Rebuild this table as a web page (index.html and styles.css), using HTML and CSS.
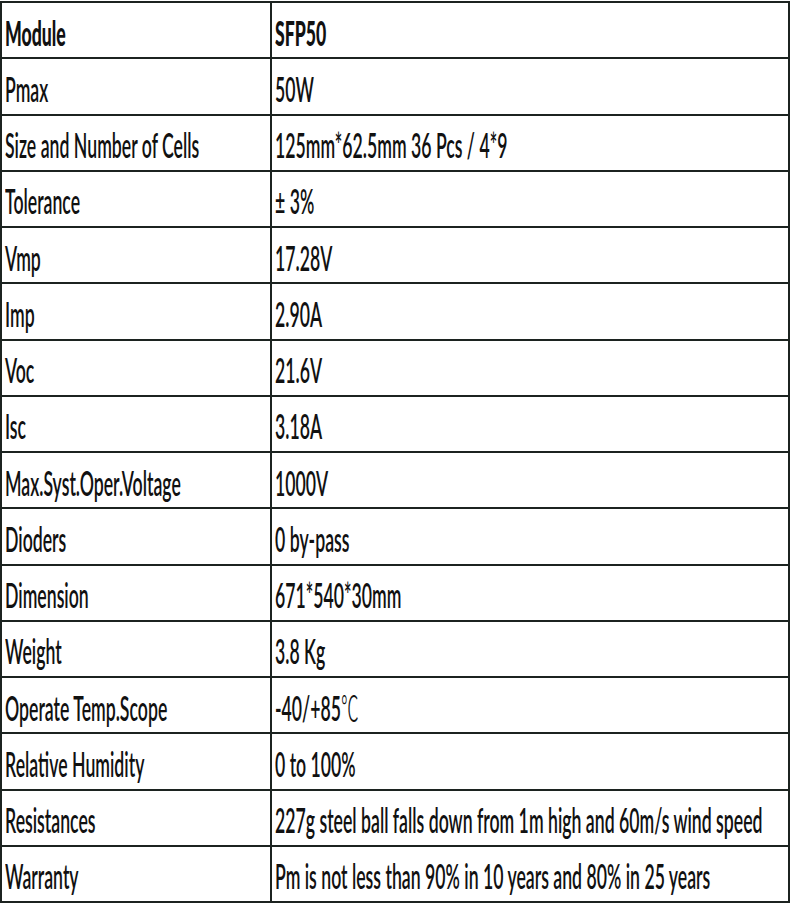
FILE: index.html
```html
<!DOCTYPE html>
<html>
<head>
<meta charset="utf-8">
<link rel="stylesheet" href="styles.css">
</head>
<body>
<div class="spec">
  <div class="cell head"><span class="t">Module</span></div><div class="cell head"><span class="t">SFP50</span></div>
  <div class="cell"><span class="t">Pmax</span></div><div class="cell"><span class="t">50W</span></div>
  <div class="cell"><span class="t">Size and Number of Cells</span></div><div class="cell"><span class="t">125mm*62.5mm 36 Pcs / 4*9</span></div>
  <div class="cell"><span class="t">Tolerance</span></div><div class="cell"><span class="t">± 3%</span></div>
  <div class="cell"><span class="t">Vmp</span></div><div class="cell"><span class="t">17.28V</span></div>
  <div class="cell"><span class="t">Imp</span></div><div class="cell"><span class="t">2.90A</span></div>
  <div class="cell"><span class="t">Voc</span></div><div class="cell"><span class="t">21.6V</span></div>
  <div class="cell"><span class="t">Isc</span></div><div class="cell"><span class="t">3.18A</span></div>
  <div class="cell"><span class="t">Max.Syst.Oper.Voltage</span></div><div class="cell"><span class="t">1000V</span></div>
  <div class="cell"><span class="t">Dioders</span></div><div class="cell"><span class="t">0 by-pass</span></div>
  <div class="cell"><span class="t">Dimension</span></div><div class="cell"><span class="t">671*540*30mm</span></div>
  <div class="cell"><span class="t">Weight</span></div><div class="cell"><span class="t">3.8 Kg</span></div>
  <div class="cell"><span class="t">Operate Temp.Scope</span></div><div class="cell"><span class="t">-40/+85<span class="deg">℃</span></span></div>
  <div class="cell"><span class="t">Relative Humidity</span></div><div class="cell"><span class="t">0 to 100%</span></div>
  <div class="cell"><span class="t">Resistances</span></div><div class="cell"><span class="t">227g steel ball falls down from 1m high and 60m/s wind speed</span></div>
  <div class="cell"><span class="t">Warranty</span></div><div class="cell"><span class="t">Pm is not less than 90% in 10 years and 80% in 25 years</span></div>
</div>
</body>
</html>
```
FILE: styles.css
```css
html, body {
  margin: 0;
  padding: 0;
  background: #ffffff;
}
body {
  width: 792px;
  height: 906px;
  overflow: hidden;
}
.spec {
  margin-top: 1px;
  width: 790px;
  height: 902px;
  box-sizing: border-box;
  padding: 2px;
  gap: 2px;
  background: #1c2320;
  display: grid;
  grid-template-columns: 268px 516px;
  grid-template-rows: repeat(16, 1fr);
}
.cell {
  background: #ffffff;
  min-width: 0;
  overflow: visible;
  display: flex;
  align-items: center;
  padding: 5px 0 0 3px;
  box-sizing: border-box;
  font-family: Lato, "Noto Sans CJK SC", sans-serif;
  font-size: 34px;
  font-weight: 600;
  color: #111111;
  white-space: nowrap;
}
.t {
  display: inline-block;
  transform: scaleX(0.52);
  transform-origin: left center;
  line-height: 1;
}
.head {
  font-weight: 900;
}
.deg {
  font-family: "Noto Sans CJK SC", sans-serif;
  font-weight: 300;
}
```
